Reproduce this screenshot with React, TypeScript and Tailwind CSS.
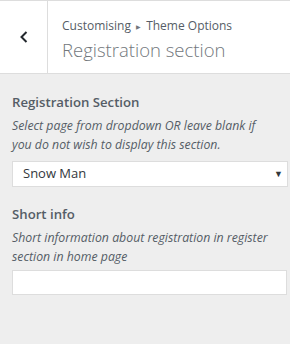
export default function App() {
  return (
    <div className="w-[290px] h-[344px] bg-[#eeeeee] text-[#555d66] font-['Open_Sans',sans-serif] overflow-hidden">
      <div className="flex h-[74px] bg-white border-t border-b border-[#dddddd]">
        <button className="w-[48px] shrink-0 flex items-center justify-center border-r border-[#dddddd] text-[#23282d]">
          <svg width="12" height="14" viewBox="0 0 12 14" fill="none" stroke="currentColor" strokeWidth="2">
            <path d="M8.5 2 L3.5 7 L8.5 12" />
          </svg>
        </button>
        <div className="flex flex-col pl-[14px] pt-[16px]">
          <span className="text-[12px] leading-[18px]">
            Customising <span className="text-[6px] align-middle mx-[2px] text-[#72777c]">▶</span> Theme Options
          </span>
          <h3 className="text-[18.5px] leading-[28px] font-light text-[#72777c]">Registration section</h3>
        </div>
      </div>
      <div className="px-3 pt-[19px]">
        <div className="text-[13.2px] leading-[18px] font-semibold">Registration Section</div>
        <p className="mt-[5px] text-[12.3px] leading-[19px] italic">
          Select page from dropdown OR leave blank if you do not wish to display this section.
        </p>
        <div className="mt-[7px] w-[276px] h-[26px] bg-white border border-[#dddddd] flex items-center justify-between pl-[10px] pr-[4px]">
          <span className="text-[13px] text-[#32373c]">Snow Man</span>
          <span className="text-[9px] text-[#32373c]">▼</span>
        </div>
        <div className="mt-[18px] text-[13.2px] leading-[18px] font-semibold">Short info</div>
        <p className="mt-[5px] text-[12.3px] leading-[19px] italic">
          Short information about registration in register section in home page
        </p>
        <div className="mt-[4px] w-[275px] h-[25px] bg-white border border-[#dddddd]" />
      </div>
    </div>
  )
}
